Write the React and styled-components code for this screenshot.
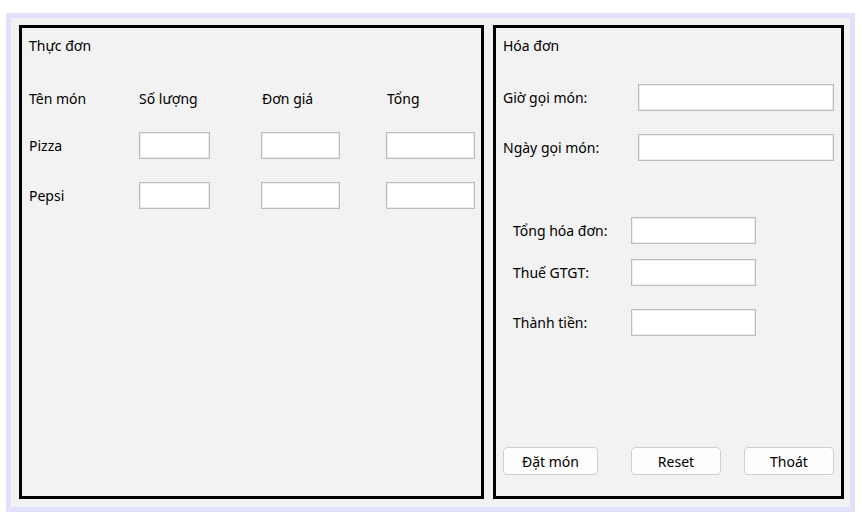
import React from "react";
import styled, { createGlobalStyle } from "styled-components";

const Global = createGlobalStyle`
  html, body { margin: 0; padding: 0; background: #ffffff; }
  body { font-family: "Noto Sans", "Segoe UI", "Liberation Sans", sans-serif; color: #000; }
  #root { padding: 13px 0 0 6px; }
  * { box-sizing: border-box; }
`;

const Frame = styled.div`
  width: 849px;
  height: 499px;
  border: 5px solid #e1e1fb;
  background: #f2f2f2;
  padding: 7px 7px 9px 8px;
  display: flex;
  gap: 9px;
`;

const Panel = styled.section`
  width: ${(p) => p.$w}px;
  height: 474px;
  border: 3px solid #000;
  padding: 8px 7px 21px 7px;
  display: flex;
  flex-direction: column;
  font-size: 14px;
`;

const Title = styled.div`
  height: 20px;
  line-height: 20px;
`;

const MenuRow = styled.div`
  display: grid;
  grid-template-columns: 110px 122px 125px 89px;
  align-items: center;
  height: 26px;
  margin-top: ${(p) => p.$mt}px;
`;

const Cell = styled.span`
  line-height: 20px;
  padding-left: ${(p) => p.$pl || 0}px;
`;

const TextBox = styled.input`
  width: ${(p) => p.$w}px;
  height: ${(p) => p.$h || 27}px;
  border: 1px solid #bdbdbd;
  box-shadow: inset 0 0 0 1px #ececec;
  background: #fff;
  padding: 0 3px;
  font: inherit;
  outline: none;
  margin: 0;
`;

const FormRow = styled.div`
  display: grid;
  grid-template-columns: ${(p) => p.$label}px auto;
  align-items: center;
  height: 27px;
  margin-top: ${(p) => p.$mt}px;
  padding-left: ${(p) => p.$pl || 0}px;
`;

const ButtonBar = styled.div`
  margin-top: auto;
  display: grid;
  grid-template-columns: 128px 113px 90px;
  align-items: center;
`;

const Button = styled.button`
  width: ${(p) => p.$w}px;
  height: 28px;
  background: #fdfdfd;
  border: 1px solid #cfcfcf;
  border-radius: 4px;
  font: inherit;
  font-size: 14px;
  color: #000;
  padding: 0;
`;

export default function App() {
  return (
    <>
      <Global />
      <Frame>
        <Panel $w={465}>
          <Title>Thực đơn</Title>
          <MenuRow $mt={30}>
            <Cell>Tên món</Cell>
            <Cell>Số lượng</Cell>
            <Cell $pl={1}>Đơn giá</Cell>
            <Cell $pl={1}>Tổng</Cell>
          </MenuRow>
          <MenuRow $mt={20}>
            <Cell>Pizza</Cell>
            <TextBox $w={71} $h={27} />
            <TextBox $w={79} $h={27} />
            <TextBox $w={89} $h={27} />
          </MenuRow>
          <MenuRow $mt={24}>
            <Cell>Pepsi</Cell>
            <TextBox $w={71} $h={27} />
            <TextBox $w={79} $h={27} />
            <TextBox $w={89} $h={27} />
          </MenuRow>
        </Panel>
        <Panel $w={351}>
          <Title>Hóa đơn</Title>
          <FormRow $label={135} $mt={28}>
            <Cell>Giờ gọi món:</Cell>
            <TextBox $w={196} />
          </FormRow>
          <FormRow $label={135} $mt={23}>
            <Cell>Ngày gọi món:</Cell>
            <TextBox $w={196} />
          </FormRow>
          <FormRow $label={118} $mt={56} $pl={10}>
            <Cell>Tổng hóa đơn:</Cell>
            <TextBox $w={125} />
          </FormRow>
          <FormRow $label={118} $mt={15} $pl={10}>
            <Cell>Thuế GTGT:</Cell>
            <TextBox $w={125} />
          </FormRow>
          <FormRow $label={118} $mt={23} $pl={10}>
            <Cell>Thành tiền:</Cell>
            <TextBox $w={125} />
          </FormRow>
          <ButtonBar>
            <Button $w={95}>Đặt món</Button>
            <Button $w={90}>Reset</Button>
            <Button $w={90}>Thoát</Button>
          </ButtonBar>
        </Panel>
      </Frame>
    </>
  );
}
